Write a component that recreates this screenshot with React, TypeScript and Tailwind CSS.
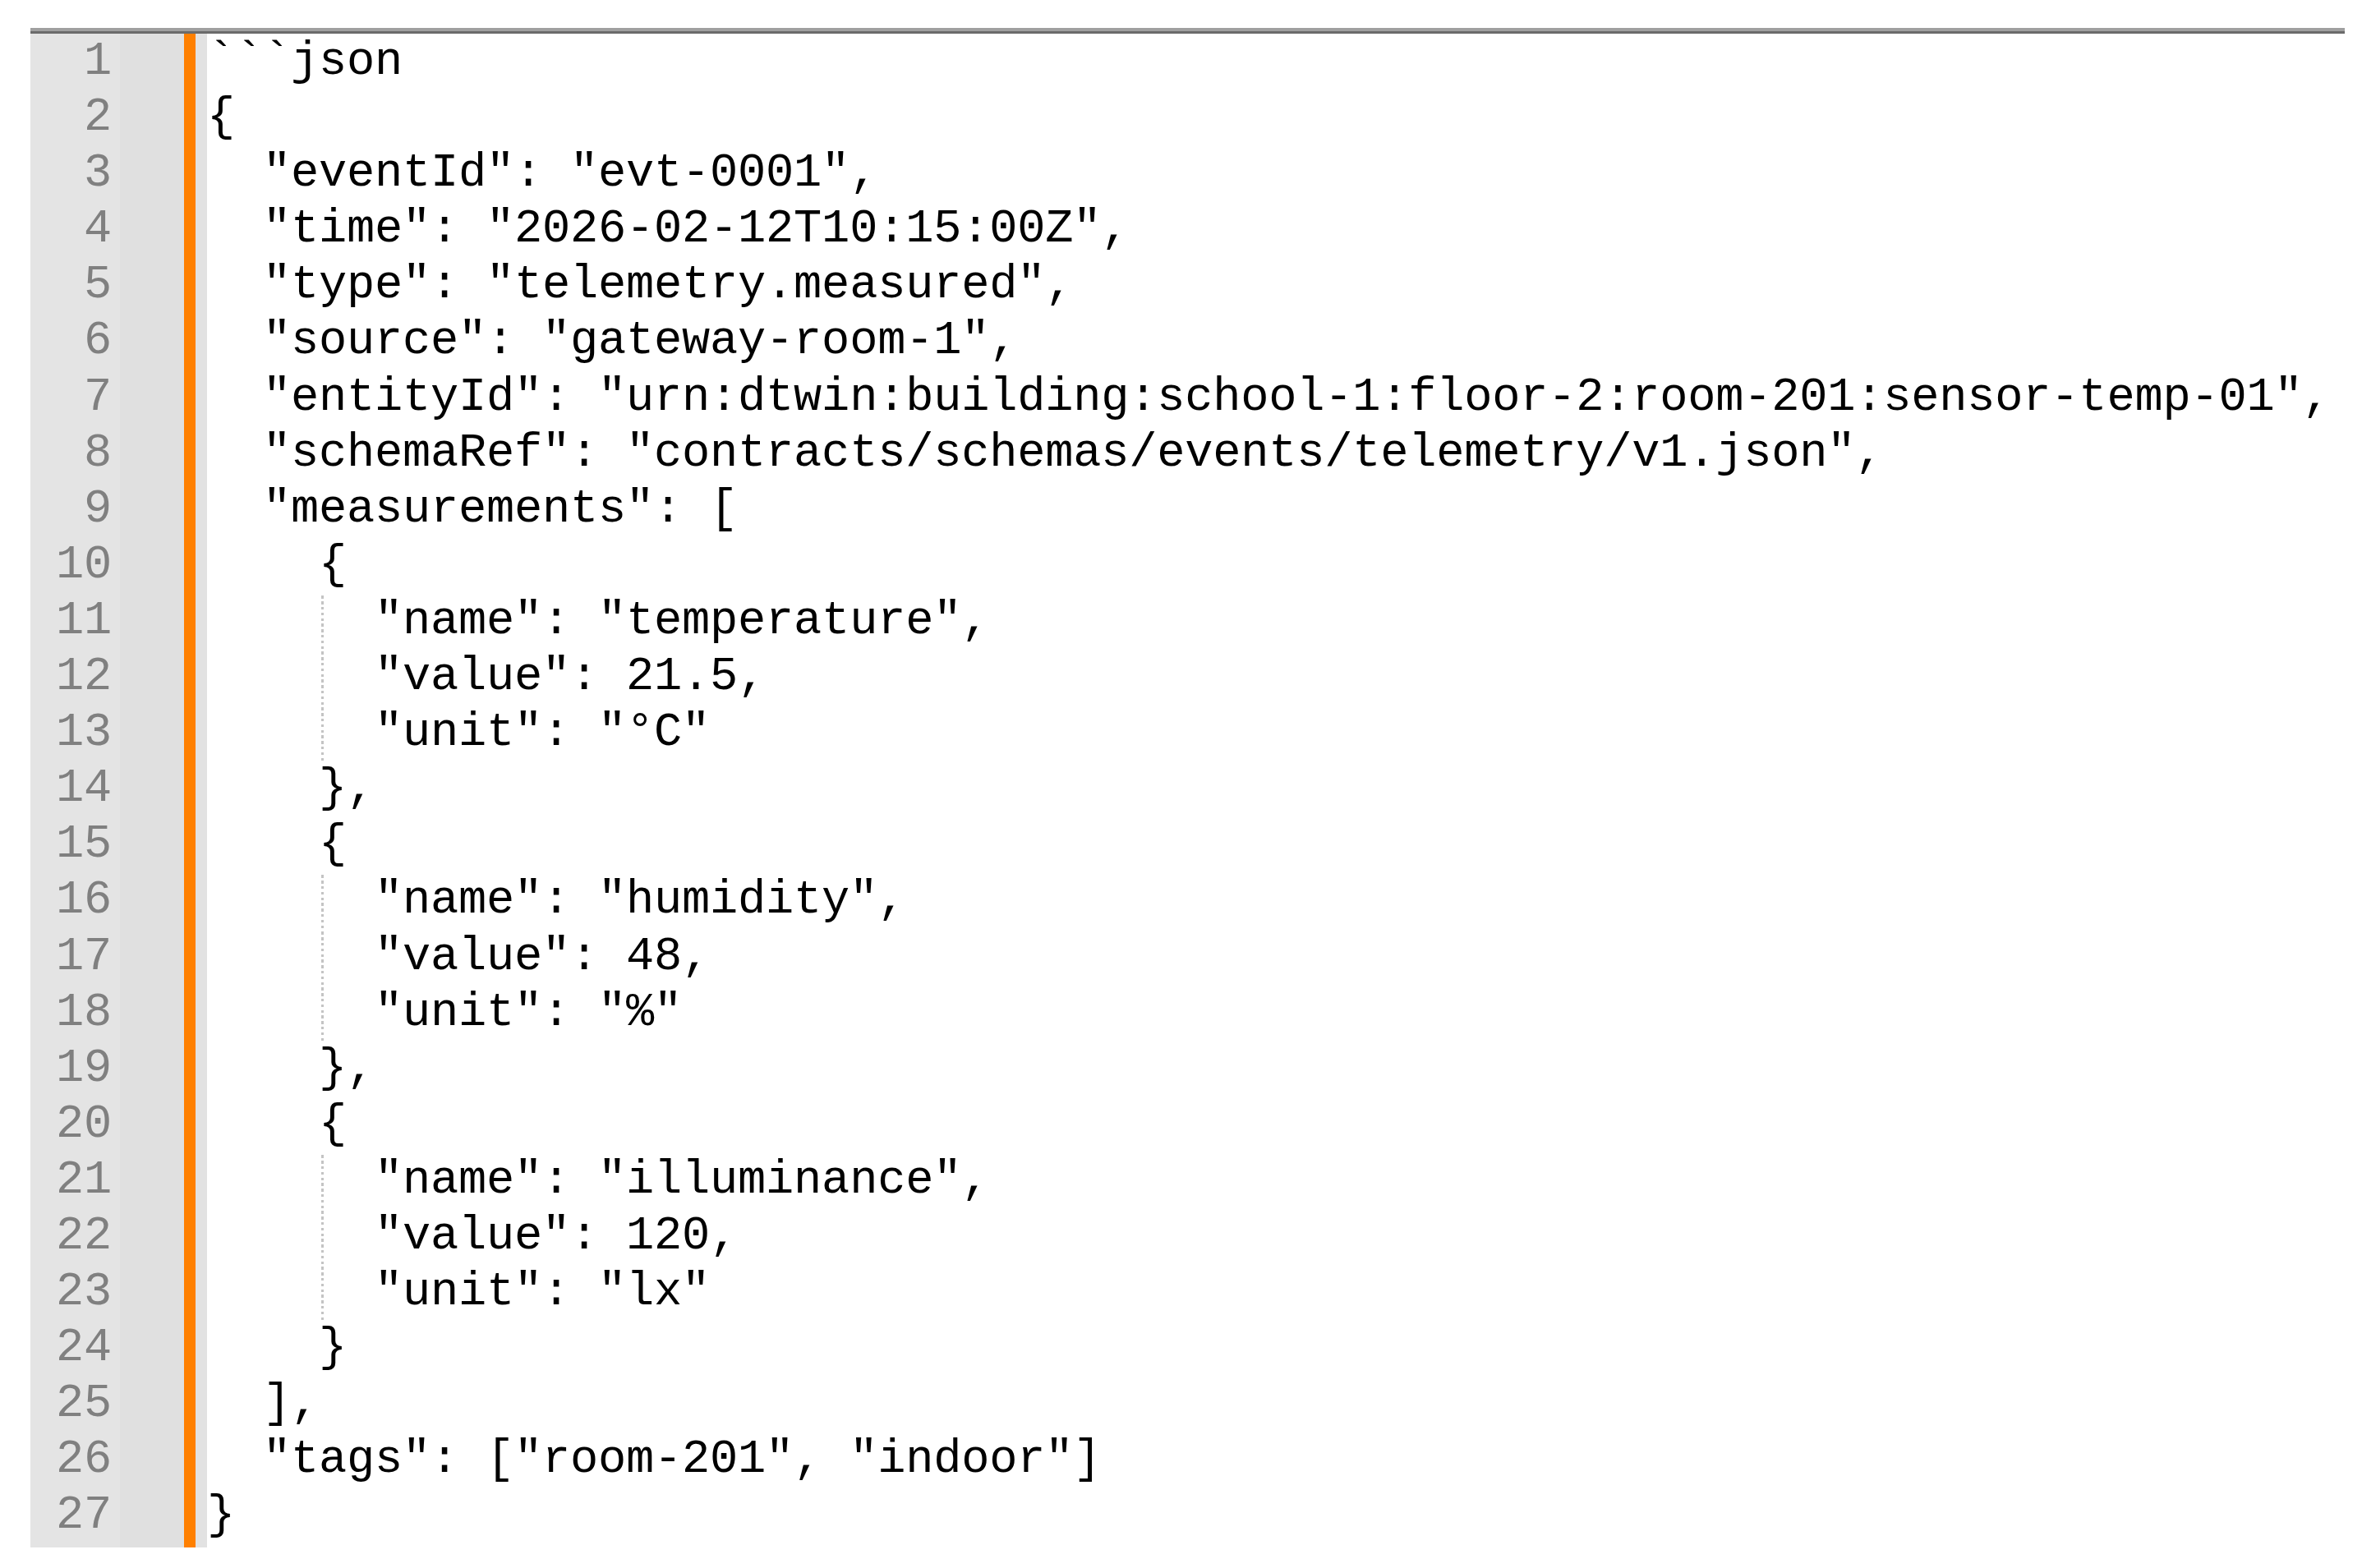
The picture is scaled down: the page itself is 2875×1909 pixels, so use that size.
import React from "react";

type Line = { text: string; guide?: boolean };

const lines: Line[] = [
  { text: "```json" },
  { text: "{" },
  { text: '  "eventId": "evt-0001",' },
  { text: '  "time": "2026-02-12T10:15:00Z",' },
  { text: '  "type": "telemetry.measured",' },
  { text: '  "source": "gateway-room-1",' },
  { text: '  "entityId": "urn:dtwin:building:school-1:floor-2:room-201:sensor-temp-01",' },
  { text: '  "schemaRef": "contracts/schemas/events/telemetry/v1.json",' },
  { text: '  "measurements": [' },
  { text: "    {" },
  { text: '      "name": "temperature",', guide: true },
  { text: '      "value": 21.5,', guide: true },
  { text: '      "unit": "°C"', guide: true },
  { text: "    }," },
  { text: "    {" },
  { text: '      "name": "humidity",', guide: true },
  { text: '      "value": 48,', guide: true },
  { text: '      "unit": "%"', guide: true },
  { text: "    }," },
  { text: "    {" },
  { text: '      "name": "illuminance",', guide: true },
  { text: '      "value": 120,', guide: true },
  { text: '      "unit": "lx"', guide: true },
  { text: "    }" },
  { text: "  ]," },
  { text: '  "tags": ["room-201", "indoor"]' },
  { text: "}" },
];

export default function App() {
  return (
    <div className="min-h-screen bg-white pt-[34px] pl-[37px] pr-[21px] font-['Liberation_Mono',monospace] text-[57px] tracking-[-0.2px] leading-[68.1px]">
      {/* window top edge */}
      <div className="h-[4px] bg-[#a0a0a0]" />
      <div className="h-[3px] bg-[#6b6b6b]" />

      <div className="flex">
        {/* line numbers */}
        <div className="w-[109px] bg-[#e4e4e4] pr-[10px] pb-[4px] text-right text-[#808080]">
          {lines.map((_, i) => (
            <div key={i} className="h-[68.1px]">
              {i + 1}
            </div>
          ))}
        </div>
        {/* symbol margin */}
        <div className="w-[78px] bg-[#e0e0e0]" />
        {/* change history */}
        <div className="w-[14px] bg-[#ff8000]" />
        {/* fold margin */}
        <div className="w-[14px] bg-[#e2e2e2]" />

        {/* editor */}
        <div className="flex-1 bg-white text-black">
          {lines.map((line, i) => (
            <div key={i} className="relative h-[68.1px] whitespace-pre">
              {line.guide && (
                <span className="absolute left-[139px] top-0 bottom-0 w-[3px] bg-[repeating-linear-gradient(to_bottom,transparent_0px,transparent_3.4px,#c4c4c4_3.4px,#c4c4c4_6.81px)]" />
              )}
              {line.text}
            </div>
          ))}
        </div>
      </div>
    </div>
  );
}
